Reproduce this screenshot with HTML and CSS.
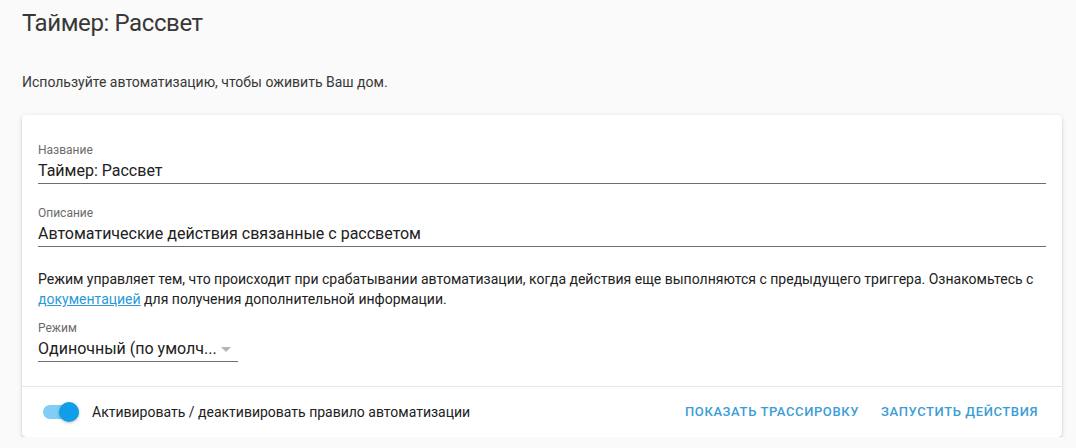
FILE: index.html
```html
<!DOCTYPE html>
<html lang="ru">
<head>
<meta charset="utf-8">
<title>Таймер: Рассвет</title>
<link rel="stylesheet" href="styles.css">
</head>
<body>
<div class="page">
  <h1 class="title">Таймер: Рассвет</h1>
  <p class="intro">Используйте автоматизацию, чтобы оживить Ваш дом.</p>
  <div class="card">
    <div class="card-body">
      <div class="field">
        <div class="field-label">Название</div>
        <div class="field-value">Таймер: Рассвет</div>
      </div>
      <div class="field field-gap">
        <div class="field-label">Описание</div>
        <div class="field-value">Автоматические действия связанные с рассветом</div>
      </div>
      <p class="help">Режим управляет тем, что происходит при срабатывании автоматизации, когда действия еще выполняются с предыдущего триггера. Ознакомьтесь с <a class="link" href="#">документацией</a> для получения дополнительной информации.</p>
      <div class="field select">
        <div class="field-label">Режим</div>
        <div class="field-value select-value">
          <span class="select-text">Одиночный (по умолч...</span>
          <span class="arrow"></span>
        </div>
      </div>
    </div>
    <div class="card-actions">
      <div class="toggle">
        <span class="track"></span>
        <span class="thumb"></span>
      </div>
      <span class="toggle-label">Активировать / деактивировать правило автоматизации</span>
      <div class="buttons">
        <span class="btn">Показать трассировку</span>
        <span class="btn">Запустить действия</span>
      </div>
    </div>
  </div>
</div>
</body>
</html>
```
FILE: styles.css
```css
* { box-sizing: border-box; }
html, body { margin: 0; padding: 0; }
body {
  background: #fafafa;
  font-family: Roboto, "Noto Sans", sans-serif;
  color: #212121;
}
.page {
  padding: 0 14px 0 22px;
}
.title {
  margin: 0;
  padding-top: 7px;
  font-size: 24px;
  line-height: 32px;
  font-weight: 400;
  letter-spacing: -0.4px;
  color: #383838;
}
.intro {
  margin: 33px 0 0 0;
  font-size: 14px;
  line-height: 20px;
  color: #383838;
}
.card {
  margin-top: 23px;
  background: #ffffff;
  border-radius: 4px;
  box-shadow: 0 2px 2px 0 rgba(0,0,0,0.14), 0 1px 5px 0 rgba(0,0,0,0.12), 0 3px 1px -2px rgba(0,0,0,0.2);
}
.card-body {
  padding: 16px 16px 24px 16px;
}
.field {
  padding-top: 11px;
  border-bottom: 1px solid #6f6f6f;
}
.field-gap { margin-top: 10px; }
.field-label {
  font-size: 12px;
  line-height: 17px;
  color: #6b6b6b;
}
.field-value {
  font-size: 16px;
  line-height: 24px;
  color: #212121;
}
.help {
  margin: 22px 0 0 0;
  font-size: 14px;
  line-height: 20px;
  color: #212121;
}
.link {
  color: #2a9ad8;
  text-decoration: underline;
}
.select {
  width: 200px;
}
.select-value {
  display: flex;
  align-items: center;
}
.select-text {
  flex: 1;
  white-space: nowrap;
}
.arrow {
  width: 0;
  height: 0;
  border-left: 5px solid transparent;
  border-right: 5px solid transparent;
  border-top: 5px solid #b5b5b5;
  margin-right: 7px;
}
.card-actions {
  display: flex;
  align-items: center;
  height: 51px;
  border-top: 1px solid #e8e8e8;
  padding: 0 16px;
}
.toggle {
  position: relative;
  width: 36px;
  height: 20px;
  margin-left: 5px;
  flex: none;
}
.track {
  position: absolute;
  left: 0;
  top: 3px;
  width: 36px;
  height: 14px;
  border-radius: 7px;
  background: #80cdf6;
}
.thumb {
  position: absolute;
  right: 0;
  top: 0;
  width: 20px;
  height: 20px;
  border-radius: 50%;
  background: #119ee8;
  box-shadow: 0 1px 3px rgba(0,0,0,0.25);
}
.toggle-label {
  margin-left: 13px;
  font-size: 14px;
  line-height: 20px;
  color: #212121;
}
.buttons {
  margin-left: auto;
  display: flex;
  gap: 6px;
}
.btn {
  padding: 0 8px;
  font-size: 13px;
  line-height: 36px;
  font-weight: 500;
  letter-spacing: 0.6px;
  text-transform: uppercase;
  color: #3a9dd6;
}
```
